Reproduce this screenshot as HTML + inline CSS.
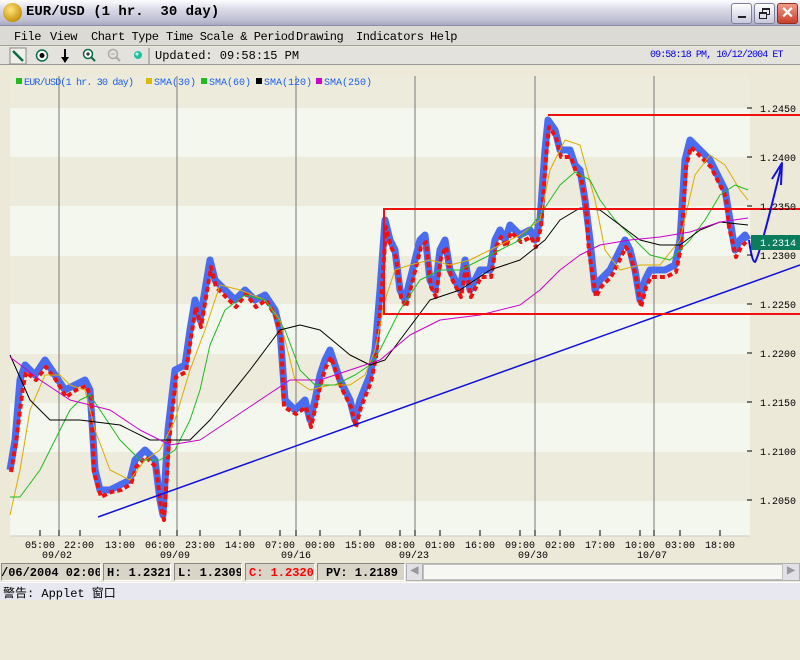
<!DOCTYPE html>
<html><head><meta charset="utf-8"><style>
*{margin:0;padding:0;box-sizing:border-box}
body{width:800px;height:600px;overflow:hidden;background:#ece9d8;font-family:"Liberation Mono","Noto Sans CJK SC",monospace;position:relative}
.abs{position:absolute;white-space:pre}
#title{left:0;top:0;width:800px;height:26px;background:linear-gradient(#fdfdff,#d8d8e6 40%,#c0c0d4 80%,#a8a8c0);border-bottom:1px solid #8e8ea8}
#title .t{left:26px;top:4px;font:bold 14px "Liberation Mono",monospace;color:#000}
.wb{top:3px;width:21px;height:21px;border:1px solid #7f7f9f;border-radius:3px;background:linear-gradient(#fff,#c8c8dc)}
#menu{left:0;top:26px;width:800px;height:20px;background:#dcdad5;font:12px "Liberation Mono",monospace;letter-spacing:-0.45px;border-bottom:1px solid #a0a0a0}
#menu span{position:absolute;top:4px;white-space:pre}
#tool{left:0;top:47px;width:800px;height:18px;background:#e4e2dc;border-bottom:1px solid #9a9a9a;font:12px "Liberation Mono",monospace}
#status{left:0;top:562px;width:800px;height:20px;background:#ece9d8;font:bold 12px "Liberation Mono",monospace}
.sb{position:absolute;top:1px;height:18px;background:#d8d4c8;border:1px solid #888;border-right-color:#fff;border-bottom-color:#fff;padding:2px 3px;white-space:nowrap;overflow:hidden}
#warn{left:0;top:582px;width:800px;height:18px;background:#e8e8f0;font:12px "Liberation Mono","Noto Sans CJK SC",monospace;padding:1px 3px;border-top:1px solid #fff}
</style></head><body>
<div id="title" class="abs">
 <div class="abs" style="left:3px;top:3px;width:19px;height:19px;border-radius:50%;background:radial-gradient(circle at 40% 35%,#ffe680,#c8960a 70%,#7a5a00);"></div>
 <div class="abs t">EUR/USD (1 hr.  30 day)</div>
 <div class="abs wb" style="left:731px"><div class="abs" style="left:6px;top:12px;width:8px;height:2px;background:#222"></div></div>
 <div class="abs wb" style="left:754px"><div class="abs" style="left:7px;top:4px;width:8px;height:7px;border:1px solid #222;border-top-width:2px"></div><div class="abs" style="left:4px;top:8px;width:8px;height:7px;border:1px solid #222;border-top-width:2px;background:#e0e0ec"></div></div>
 <div class="abs wb" style="left:777px;background:linear-gradient(#f09a8a,#c8402a);border-color:#903020;color:#fff;font:bold 16px 'Liberation Sans',sans-serif;text-align:center;line-height:19px">✕</div>
</div>
<div id="menu" class="abs"><span style="left:14px">File</span><span style="left:50px">View</span><span style="left:91px">Chart Type</span><span style="left:166px">Time Scale &amp; Period</span><span style="left:296px">Drawing</span><span style="left:356px">Indicators</span><span style="left:430px">Help</span></div>
<div id="tool" class="abs">
 <svg class="abs" style="left:0;top:0" width="160" height="18">
  <rect x="10" y="1" width="16" height="16" fill="#f0efe8" stroke="#888"/>
  <line x1="13" y1="4" x2="23" y2="14" stroke="#0a6a4a" stroke-width="2.5"/>
  <circle cx="42" cy="8.5" r="5.5" fill="#fff" stroke="#0a6a4a" stroke-width="1.5"/><circle cx="42" cy="8.5" r="2.5" fill="#000"/>
  <line x1="65" y1="2" x2="65" y2="14" stroke="#000" stroke-width="2"/><path d="M61 10 L65 16 L69 10Z" fill="#000"/>
  <circle cx="88" cy="7" r="4.5" fill="#fff" stroke="#0a6a4a" stroke-width="1.5"/><path d="M86 7h4M88 5v4" stroke="#000"/><line x1="91" y1="10" x2="95" y2="14" stroke="#0a6a4a" stroke-width="2"/>
  <circle cx="113" cy="7" r="4.5" fill="none" stroke="#aaa" stroke-width="1.5"/><path d="M111 7h4" stroke="#aaa"/><line x1="116" y1="10" x2="120" y2="14" stroke="#aaa" stroke-width="2"/>
  <circle cx="138" cy="8" r="4" fill="#20c0a0"/><circle cx="137" cy="7" r="1.5" fill="#bfffee"/>
  <line x1="149" y1="1" x2="149" y2="17" stroke="#888"/>
 </svg>
 <span class="abs" style="left:155px;top:2px">Updated: 09:58:15 PM</span>
 <span class="abs" style="left:650px;top:3px;font-size:10px;letter-spacing:-0.9px;color:#0000ee">09:58:18 PM, 10/12/2004 ET</span>
</div>
<svg class="abs" style="left:0;top:65px" width="800" height="497" viewBox="0 65 800 497">
 <rect x="0" y="65" width="800" height="497" fill="#ece9d8"/>
 <rect x="10" y="76" width="740" height="460" fill="#f4f7ee"/>
 <g fill="#ecebdc">
  <rect x="10" y="76" width="740" height="32"/>
  <rect x="10" y="157" width="740" height="49"/>
  <rect x="10" y="256" width="740" height="48"/>
  <rect x="10" y="354" width="740" height="49"/>
  <rect x="10" y="452" width="740" height="49"/>
 </g>
 <g stroke="#777" stroke-width="1">
  <line x1="59" y1="76" x2="59" y2="536"/><line x1="177" y1="76" x2="177" y2="536"/><line x1="296" y1="76" x2="296" y2="536"/><line x1="415" y1="76" x2="415" y2="536"/><line x1="535" y1="76" x2="535" y2="536"/><line x1="654" y1="76" x2="654" y2="536"/>
 </g>
 <g font-family="Liberation Mono,monospace" font-size="10" fill="#1e5ff0" style="white-space:pre">
  <rect x="16" y="78" width="6" height="6" fill="#22bb22"/><text x="24" y="85" textLength="110">EUR/USD(1 hr.  30 day)</text>
  <rect x="146" y="78" width="6" height="6" fill="#ddbb00"/><text x="154" y="85">SMA(30)</text>
  <rect x="201" y="78" width="6" height="6" fill="#22bb22"/><text x="209" y="85">SMA(60)</text>
  <rect x="256" y="78" width="6" height="6" fill="#000"/><text x="264" y="85">SMA(120)</text>
  <rect x="316" y="78" width="6" height="6" fill="#cc00cc"/><text x="324" y="85">SMA(250)</text>
 </g>
 <g fill="none" stroke-linejoin="round">
  <polyline stroke="#4a6cf0" stroke-width="7" points="10,470 15,440 20,380 25,365 35,375 45,360 55,375 65,390 75,385 85,380 90,390 95,470 100,490 110,490 120,485 130,480 135,460 145,450 155,460 160,500 163,515 168,430 175,370 185,365 190,330 195,300 200,320 210,260 215,280 225,290 235,300 245,290 255,300 265,295 275,310 280,330 285,400 295,410 305,400 310,420 315,400 320,375 325,360 330,350 340,380 350,400 355,420 360,400 370,375 375,350 380,290 385,220 390,240 395,250 400,290 405,300 410,280 420,240 425,235 430,280 435,290 440,250 445,240 450,270 460,290 465,260 470,290 480,270 490,270 495,240 500,230 505,240 510,225 520,235 530,230 535,240 540,220 545,150 548,120 555,130 560,150 570,150 575,165 580,170 585,200 590,240 595,290 600,280 610,270 620,250 625,240 630,250 635,270 640,300 645,280 650,270 655,270 665,270 675,265 680,240 685,160 690,140 700,150 710,160 715,170 720,180 725,190 730,220 735,250 740,240 745,235 748,240"/>
  <polyline stroke="#f01010" stroke-width="4" stroke-dasharray="5 3" transform="translate(1,2)" points="10,470 15,440 22,385 25,370 35,378 45,365 55,378 65,395 75,388 85,384 90,395 93,470 100,495 110,490 120,488 130,482 135,465 145,455 155,465 160,505 163,518 168,440 175,375 185,370 190,335 195,305 200,325 210,265 215,285 225,295 235,305 245,292 255,305 265,298 275,315 280,335 283,405 295,412 305,405 310,425 315,403 320,380 325,365 330,355 340,385 350,405 355,425 360,405 370,380 375,355 380,300 385,225 390,245 395,255 400,295 405,305 410,285 420,245 425,240 430,285 435,295 440,255 445,245 450,275 460,295 465,265 470,295 480,275 490,275 495,245 500,235 505,245 510,230 520,240 530,235 535,245 540,225 545,155 548,125 555,135 560,155 570,155 575,170 580,175 585,205 588,250 595,295 600,285 610,275 620,255 625,245 630,255 635,275 640,305 645,285 650,275 655,275 665,275 675,270 680,245 685,165 690,145 700,155 710,165 715,175 720,185 725,195 728,225 735,255 740,245 745,240"/>
  <polyline stroke="#ddaa00" stroke-width="1" points="10,515 20,470 30,410 45,375 60,375 70,385 85,390 95,430 110,470 130,480 145,460 160,450 175,420 190,370 205,330 220,285 240,290 265,300 280,320 295,380 310,390 330,385 350,385 365,375 375,350 385,300 395,270 410,265 430,260 450,265 470,260 500,245 520,235 540,220 550,170 565,140 580,145 595,200 605,250 620,270 640,265 660,265 680,240 695,175 710,155 725,165 740,190 748,200"/>
  <polyline stroke="#22bb22" stroke-width="1" points="10,497 20,497 40,470 60,430 70,410 80,400 90,395 100,410 120,440 140,460 160,460 175,450 190,420 200,390 210,345 225,310 245,295 265,300 285,330 300,370 315,385 335,385 355,375 370,365 380,350 400,310 420,280 440,270 460,270 480,260 500,250 520,240 540,215 560,185 575,172 590,180 600,200 615,220 630,235 650,255 670,260 690,240 705,220 720,195 735,185 748,190"/>
  <polyline stroke="#000" stroke-width="1" points="10,355 30,400 50,420 80,420 120,425 150,440 190,440 210,420 250,370 280,330 300,325 320,330 350,355 370,365 385,360 400,340 430,300 460,290 490,270 520,260 545,240 560,220 580,208 600,210 620,225 640,240 660,245 680,245 700,230 720,222 748,225"/>
  <polyline stroke="#cc00cc" stroke-width="1" points="10,357 40,380 70,400 110,410 140,430 170,445 200,440 230,420 260,400 290,380 320,380 350,370 380,360 410,335 440,320 480,315 520,305 540,290 560,270 580,255 600,245 630,240 660,237 690,232 720,222 748,218"/>
  <line x1="98" y1="517" x2="800" y2="265" stroke="#1010e0" stroke-width="1.5"/>
  <g stroke="#f01010" stroke-width="2"><line x1="548" y1="115" x2="800" y2="115"/><line x1="383" y1="209" x2="800" y2="209"/><line x1="383" y1="314" x2="800" y2="314"/><line x1="384" y1="209" x2="384" y2="314"/></g>
  <path d="M749 240 Q752 262 755 262 Q760 255 782 163 M772 179 L782 163 L781 185" stroke="#1010e0" stroke-width="2"/>
 </g>
 <g font-family="Liberation Mono,monospace" font-size="10" fill="#000" stroke="#000">
  <line x1="747" y1="108" x2="752" y2="108"/><line x1="747" y1="157" x2="752" y2="157"/><line x1="747" y1="206" x2="752" y2="206"/><line x1="747" y1="255" x2="752" y2="255"/><line x1="747" y1="304" x2="752" y2="304"/><line x1="747" y1="353" x2="752" y2="353"/><line x1="747" y1="402" x2="752" y2="402"/><line x1="747" y1="451" x2="752" y2="451"/><line x1="747" y1="500" x2="752" y2="500"/>
  <g stroke="none"><text x="760" y="112">1.2450</text><text x="760" y="161">1.2400</text><text x="760" y="210">1.2350</text><text x="760" y="259">1.2300</text><text x="760" y="308">1.2250</text><text x="760" y="357">1.2200</text><text x="760" y="406">1.2150</text><text x="760" y="455">1.2100</text><text x="760" y="504">1.2050</text></g>
 </g>
 <rect x="751" y="235" width="49" height="15" fill="#0b7d5c"/>
 <text x="760" y="246" font-family="Liberation Mono,monospace" font-size="10" fill="#fff">1.2314</text>
 <g stroke="#000"><line x1="10" y1="536" x2="750" y2="536" stroke="#ccc"/>
  <line x1="40" y1="530" x2="40" y2="536"/><line x1="59" y1="530" x2="59" y2="536"/><line x1="80" y1="530" x2="80" y2="536"/><line x1="120" y1="530" x2="120" y2="536"/><line x1="160" y1="530" x2="160" y2="536"/><line x1="177" y1="530" x2="177" y2="536"/><line x1="200" y1="530" x2="200" y2="536"/><line x1="240" y1="530" x2="240" y2="536"/><line x1="280" y1="530" x2="280" y2="536"/><line x1="296" y1="530" x2="296" y2="536"/><line x1="320" y1="530" x2="320" y2="536"/><line x1="360" y1="530" x2="360" y2="536"/><line x1="400" y1="530" x2="400" y2="536"/><line x1="415" y1="530" x2="415" y2="536"/><line x1="440" y1="530" x2="440" y2="536"/><line x1="480" y1="530" x2="480" y2="536"/><line x1="520" y1="530" x2="520" y2="536"/><line x1="535" y1="530" x2="535" y2="536"/><line x1="560" y1="530" x2="560" y2="536"/><line x1="600" y1="530" x2="600" y2="536"/><line x1="640" y1="530" x2="640" y2="536"/><line x1="654" y1="530" x2="654" y2="536"/><line x1="680" y1="530" x2="680" y2="536"/><line x1="720" y1="530" x2="720" y2="536"/>
 </g>
 <g font-family="Liberation Mono,monospace" font-size="10" fill="#000" text-anchor="middle">
  <text x="40" y="548">05:00</text><text x="79" y="548">22:00</text><text x="120" y="548">13:00</text><text x="160" y="548">06:00</text><text x="200" y="548">23:00</text><text x="240" y="548">14:00</text><text x="280" y="548">07:00</text><text x="320" y="548">00:00</text><text x="360" y="548">15:00</text><text x="400" y="548">08:00</text><text x="440" y="548">01:00</text><text x="480" y="548">16:00</text><text x="520" y="548">09:00</text><text x="560" y="548">02:00</text><text x="600" y="548">17:00</text><text x="640" y="548">10:00</text><text x="680" y="548">03:00</text><text x="720" y="548">18:00</text>
  <text x="57" y="558">09/02</text><text x="175" y="558">09/09</text><text x="296" y="558">09/16</text><text x="414" y="558">09/23</text><text x="533" y="558">09/30</text><text x="652" y="558">10/07</text>
 </g>
</svg>
<div id="status" class="abs">
 <div class="sb" style="left:1px;width:100px;text-indent:-4px">/06/2004 02:00:</div>
 <div class="sb" style="left:103px;width:68px">H: 1.2321</div>
 <div class="sb" style="left:174px;width:68px">L: 1.2309</div>
 <div class="sb" style="left:245px;width:70px;color:#f00">C: 1.2320</div>
 <div class="sb" style="left:317px;width:88px;padding-left:8px">PV: 1.2189</div>
 <div class="abs" style="left:406px;top:1px;width:394px;height:18px;background:#f0f0f0;border:1px solid #b0b0b0">
  <div class="abs" style="left:0;top:0;width:16px;height:16px;background:#e0e0e6;border-right:1px solid #aaa;color:#999;font-size:10px;text-align:center;line-height:16px">◀</div>
  <div class="abs" style="left:16px;top:0;width:360px;height:16px;background:#f6f6f2;border:1px solid #c0c0c0"></div>
  <div class="abs" style="right:0;top:0;width:16px;height:16px;background:#e0e0e6;color:#999;font-size:10px;text-align:center;line-height:16px">▶</div>
 </div>
</div>
<div id="warn" class="abs">警告: Applet 窗口</div>
</body></html>
